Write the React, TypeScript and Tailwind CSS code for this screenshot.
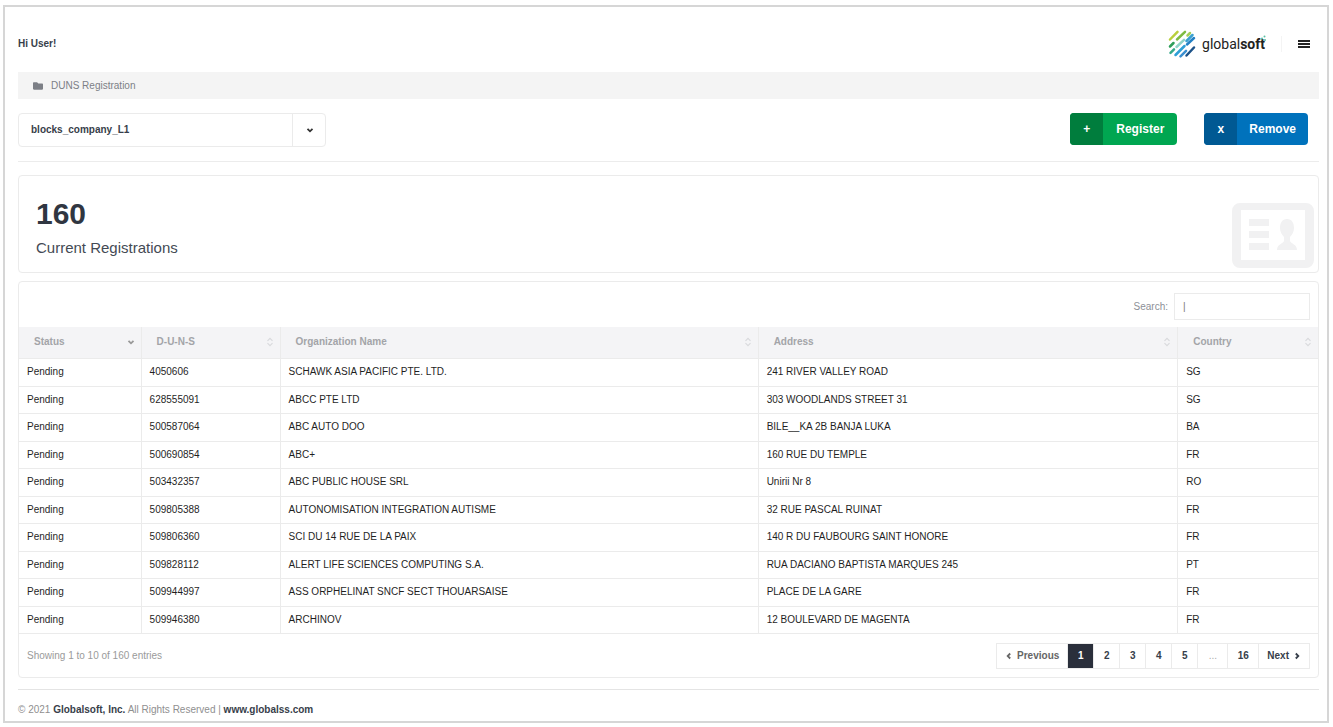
import { useState } from 'react';
import { FaFolder } from 'react-icons/fa';

interface Registration {
  status: string;
  duns: string;
  name: string;
  address: string;
  country: string;
}

const registrations: Registration[] = [
  { status: 'Pending', duns: '4050606', name: 'SCHAWK ASIA PACIFIC PTE. LTD.', address: '241 RIVER VALLEY ROAD', country: 'SG' },
  { status: 'Pending', duns: '628555091', name: 'ABCC PTE LTD', address: '303 WOODLANDS STREET 31', country: 'SG' },
  { status: 'Pending', duns: '500587064', name: 'ABC AUTO DOO', address: 'BILE__KA 2B BANJA LUKA', country: 'BA' },
  { status: 'Pending', duns: '500690854', name: 'ABC+', address: '160 RUE DU TEMPLE', country: 'FR' },
  { status: 'Pending', duns: '503432357', name: 'ABC PUBLIC HOUSE SRL', address: 'Unirii Nr 8', country: 'RO' },
  { status: 'Pending', duns: '509805388', name: 'AUTONOMISATION INTEGRATION AUTISME', address: '32 RUE PASCAL RUINAT', country: 'FR' },
  { status: 'Pending', duns: '509806360', name: 'SCI DU 14 RUE DE LA PAIX', address: '140 R DU FAUBOURG SAINT HONORE', country: 'FR' },
  { status: 'Pending', duns: '509828112', name: 'ALERT LIFE SCIENCES COMPUTING S.A.', address: 'RUA DACIANO BAPTISTA MARQUES 245', country: 'PT' },
  { status: 'Pending', duns: '509944997', name: 'ASS ORPHELINAT SNCF SECT THOUARSAISE', address: 'PLACE DE LA GARE', country: 'FR' },
  { status: 'Pending', duns: '509946380', name: 'ARCHINOV', address: '12 BOULEVARD DE MAGENTA', country: 'FR' },
];

const columns = [
  { label: 'Status', width: 'w-[9.4%]', sorted: true },
  { label: 'D-U-N-S', width: 'w-[10.7%]' },
  { label: 'Organization Name', width: 'w-[36.8%]' },
  { label: 'Address', width: 'w-[32.3%]' },
  { label: 'Country', width: 'w-[10.8%]' },
];

const pages = ['1', '2', '3', '4', '5', '...', '16'];

const Chevron = ({ d, className }: { d: string; className: string }) => (
  <svg className={className} viewBox="0 0 8 8" fill="none" stroke="currentColor" strokeWidth="1.8" aria-hidden="true">
    <path d={d} />
  </svg>
);

const SortIcon = () => (
  <svg className="h-2.5 w-2 text-[#d9dadd]" viewBox="0 0 8 10" fill="none" stroke="currentColor" strokeWidth="1.2" aria-hidden="true">
    <path d="M1.5 3.8 4 1.3l2.5 2.5M1.5 6.2 4 8.7l2.5-2.5" />
  </svg>
);

const Logo = () => (
  <a href="#" aria-label="globalsoft" className="flex items-center gap-1.5">
    <svg className="h-7 w-7" viewBox="0 0 28 28" fill="none" strokeWidth="2.5" strokeLinecap="round" aria-hidden="true">
      <path d="M2 9.5 9.5 1.8" stroke="#b9cf3c" />
      <path d="M9 9.5 17 1.8" stroke="#7dbb42" />
      <path d="M19.5 5.5 22 3" stroke="#a3cf5a" />
      <path d="M2 16.5 5.5 13" stroke="#2f9e5a" />
      <path d="M8.5 17 16 9.8" stroke="#8fd3c8" />
      <path d="M18.5 11 24.5 5" stroke="#3aa0d0" />
      <path d="M2.5 22.8 6 19.3" stroke="#35a98a" />
      <path d="M7.5 25 16.5 16" stroke="#2e9fd6" />
      <path d="M19 14.5 26 8" stroke="#2380c4" />
      <path d="M12.5 26.3 18 20.8" stroke="#3a8fd0" />
      <path d="M18.5 25.5 26 17.5" stroke="#1d5288" />
    </svg>
    <span className="relative font-[Roboto,sans-serif] text-[14px] leading-5 text-[#222]">
      global<b>soft</b>
      <svg className="absolute top-0 -right-0.5 h-2 w-2" viewBox="0 0 8 8" fill="#5cc0a4" aria-hidden="true">
        <circle cx="3" cy="4.5" r="1" />
        <circle cx="5.5" cy="2.5" r="1" />
        <circle cx="6" cy="6" r="1" />
      </svg>
    </span>
  </a>
);

const MenuIcon = () => (
  <svg className="h-2.5 w-3" viewBox="0 0 12 10" fill="currentColor" aria-hidden="true">
    <path d="M0 1h12v2H0zM0 4h12v2H0zM0 7h12v2H0z" />
  </svg>
);

const CardIcon = () => (
  <svg className="h-[65px] w-[82px] text-[#f1f1f2]" viewBox="0 0 82 65" fill="currentColor" aria-hidden="true">
    <path fillRule="evenodd" d="M8 0h66a8 8 0 0 1 8 8v49a8 8 0 0 1-8 8H8a8 8 0 0 1-8-8V8a8 8 0 0 1 8-8Zm1 7v50h64V7Z" />
    <path d="M17 16h20v7H17zM17 28h20v7H17zM17 40h20v7H17z" />
    <path d="M55 16c5 0 7 4 7 9 0 4-2 7-4 9v4c1 3 7 3 7 9H45c0-6 6-6 7-9v-4c-2-2-4-5-4-9 0-5 2-9 7-9Z" />
  </svg>
);

export default function App() {
  const [company, setCompany] = useState('blocks_company_L1');
  const [search, setSearch] = useState('');

  return (
    <div className="bg-white pt-[5px] pr-1 pb-1 pl-[3px] font-['Liberation_Sans',Arial,sans-serif] text-[10px] leading-4 text-[#1f1f1f]">
      <div className="border-2 border-[#d6d6d6] pr-2 pl-[13px]">
        {/* Header */}
        <header className="flex h-[65px] items-center justify-between pt-2">
          <p className="font-bold text-[#373e4a]">Hi User!</p>
          <div className="flex items-center pr-[9px]">
            <Logo />
            <span className="ml-4 h-4 w-px bg-[#f4f4f4]" />
            <button type="button" aria-label="Menu" className="ml-4 text-[#222]">
              <MenuIcon />
            </button>
          </div>
        </header>

        {/* Breadcrumb */}
        <nav aria-label="Breadcrumb" className="flex h-[27px] items-center gap-2 bg-[#f4f4f4] pl-[15px] text-[#7c7f86]">
          <FaFolder className="size-2.5" />
          <a href="#">DUNS Registration</a>
        </nav>

        {/* Company and actions */}
        <div className="flex items-start justify-between border-b border-[#ececec] py-3.5">
          <div className="relative w-[308px]">
            <select
              aria-label="Company"
              value={company}
              onChange={(e) => setCompany(e.target.value)}
              className="h-[34px] w-full appearance-none rounded-sm border border-[#ebebeb] bg-white pl-3 font-bold text-[#373e4a]"
            >
              <option>blocks_company_L1</option>
            </select>
            <span className="pointer-events-none absolute inset-y-0 right-0 flex w-[34px] items-center justify-center border-l border-[#ebebeb]">
              <Chevron d="M1.5 2.8 4 5.3l2.5-2.5" className="size-2 text-[#333]" />
            </span>
          </div>
          <div className="flex gap-[27px] pr-[11px] text-[12px] font-bold text-white">
            <button type="button" className="flex h-8 items-center rounded-sm bg-[#00a651]">
              <span className="flex h-full w-[33px] items-center justify-center rounded-l-sm bg-[#007d3d]">+</span>
              <span className="px-[13px]">Register</span>
            </button>
            <button type="button" className="flex h-8 items-center rounded-sm bg-[#0072bc]">
              <span className="flex h-full w-[33px] items-center justify-center rounded-l-sm bg-[#005993]">x</span>
              <span className="px-3">Remove</span>
            </button>
          </div>
        </div>

        {/* Stats tile */}
        <section className="mt-[13px] flex h-[98px] items-end justify-between rounded-sm border border-[#ebebeb] pr-1 pb-1 pl-[17px]">
          <div className="self-start pt-5">
            <p className="text-[30px] leading-9 font-bold text-[#303641]">160</p>
            <h1 className="mt-1.5 text-[15px] leading-5 text-[#444a54]">Current Registrations</h1>
          </div>
          <CardIcon />
        </section>

        {/* Registrations table */}
        <section className="mt-2 rounded-sm border border-[#ebebeb]">
          <div className="flex items-center justify-end gap-1.5 pt-[11px] pr-2 pb-[7px] text-[#8d9097]">
            <label htmlFor="search">Search:</label>
            <input
              id="search"
              type="text"
              placeholder="|"
              value={search}
              onChange={(e) => setSearch(e.target.value)}
              className="h-[27px] w-[136px] border border-[#ebebeb] px-2 text-[#555] outline-none placeholder:text-[#777]"
            />
          </div>
          <table className="w-full table-fixed border-collapse">
            <thead>
              <tr className="h-[31px] bg-[#f4f4f6] text-left text-[#a3a4a8]">
                {columns.map((col) => (
                  <th key={col.label} scope="col" className={`${col.width} border-b border-l border-[#ebebeb] pr-1.5 pl-[15px] first:border-l-0`}>
                    <div className="flex items-center justify-between">
                      {col.label}
                      {col.sorted ? <Chevron d="M1.5 2.8 4 5.3l2.5-2.5" className="size-2 text-[#999]" /> : <SortIcon />}
                    </div>
                  </th>
                ))}
              </tr>
            </thead>
            <tbody>
              {registrations.map((row) => (
                <tr key={row.duns} className="h-7 border-b border-[#ebebeb] even:h-[27px]">
                  <td className="pl-2">{row.status}</td>
                  <td className="border-l border-[#ebebeb] pl-2">{row.duns}</td>
                  <td className="border-l border-[#ebebeb] pl-2">{row.name}</td>
                  <td className="border-l border-[#ebebeb] pl-2">{row.address}</td>
                  <td className="border-l border-[#ebebeb] pl-2">{row.country}</td>
                </tr>
              ))}
            </tbody>
          </table>
          <div className="flex items-center justify-between px-2 pt-[9px] pb-2">
            <p className="text-[#9a9a9a]">Showing 1 to 10 of 160 entries</p>
            <div className="flex h-[26px] divide-x divide-[#ebebeb] border border-[#ebebeb] font-bold text-[#373e4a]">
              <button type="button" className="flex items-center gap-1 px-2 text-[#666]">
                <Chevron d="M5.2 1.5 2.7 4l2.5 2.5" className="size-2" />
                Previous
              </button>
              {pages.map((page) => (
                <button
                  key={page}
                  type="button"
                  disabled={page === '...'}
                  className={
                    page === '1'
                      ? 'w-[26px] bg-[#2a2f3b] text-white'
                      : page === '...'
                        ? 'w-[30px] font-normal text-[#aaa]'
                        : page === '16'
                          ? 'w-[31px]'
                          : 'w-[26px]'
                  }
                >
                  {page}
                </button>
              ))}
              <button type="button" className="flex items-center gap-1 px-2">
                Next
                <Chevron d="M2.8 1.5 5.3 4 2.8 6.5" className="size-2" />
              </button>
            </div>
          </div>
        </section>

        {/* Footer */}
        <footer className="mt-[11px] border-t border-[#e4e4e4] pt-3 pb-[3px] text-[#8f8f8f]">
          © 2021 <b className="text-[#373e4a]">Globalsoft, Inc.</b> All Rights Reserved |{' '}
          <a href="#" className="font-bold text-[#373e4a]">www.globalss.com</a>
        </footer>
      </div>
    </div>
  );
}
